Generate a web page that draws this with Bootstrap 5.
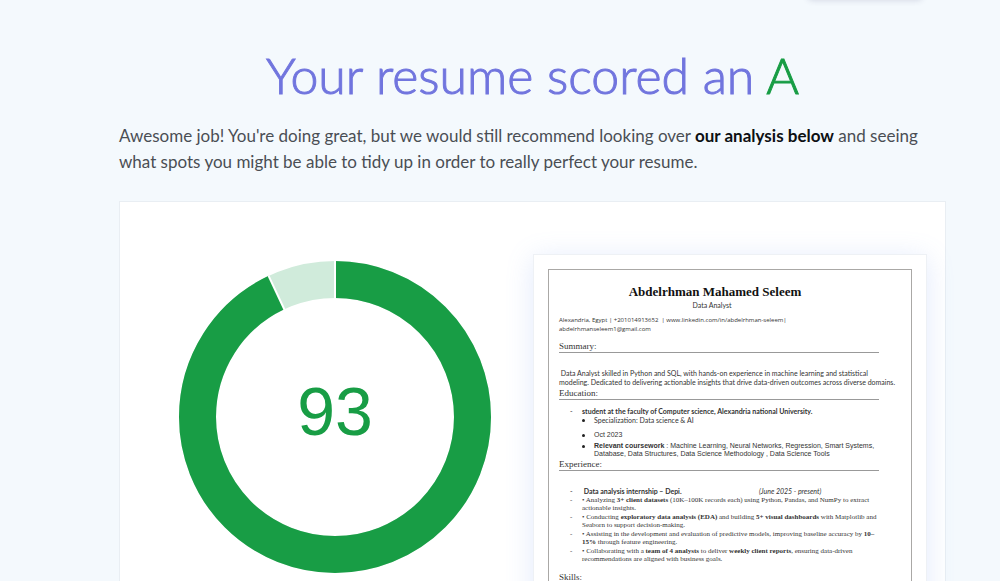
<!DOCTYPE html>
<html lang="en">
<head>
<meta charset="utf-8">
<meta name="viewport" content="width=device-width, initial-scale=1">
<title>Resume score</title>
<link href="https://cdn.jsdelivr.net/npm/bootstrap@5.3.0/dist/css/bootstrap.min.css" rel="stylesheet">
<style>
  body { background: #f4f9fd; color: #4a4e54; font-family: Lato, sans-serif; }
  .top-edge { height: 10px; padding-right: 78px; overflow: hidden; }
  .top-pill { width: 114px; height: 20px; margin-top: -21px; border-radius: 4px; box-shadow: 0 1px 6px rgba(60, 60, 110, .2); }
  .page { margin-left: 119px; margin-right: 54px; }
  .score-title { color: #7175de; font-size: 50px; line-height: 60px; font-weight: 300; padding-top: 35px; -webkit-text-stroke: 1px currentColor; }
  .grade { color: #189d45; }
  .intro { font-size: 17px; line-height: 26px; margin-top: 18px; margin-bottom: 26px; }
  .intro b { color: #0d1013; }
  .report { border: 1px solid #e9eef3; }
  .chart { width: 312px; margin: 59px 42px 59px 59px; }
  .chart text { font: 68px "Liberation Sans", sans-serif; }
  .sheet { margin-top: 52px; margin-right: 18px; padding: 14px; border: 1px solid #eef1f5; box-shadow: 0 4px 26px rgba(110, 150, 240, .2); }
  .paper { border: 1px solid #aaa8a6; padding: 13px 10px 40px; color: #333; font-size: 7px; line-height: 9px; white-space: nowrap; }
  .paper-name { font: bold 13px/18px "Liberation Serif", serif; color: #111; text-align: center; padding-right: 30px; }
  .role { padding-right: 36px; }
  .role, .contact { padding-bottom: 6px; }
  .contact { font-family: "Open Sans", sans-serif; font-size: 6px; }
  .paper h2 { font: 9px/12px "Liberation Serif", serif; margin: 0 22px 0 0; border-bottom: 1px solid #999; }
  .sum { padding-top: 16px; }
  .paper ul { list-style: none; margin: 0; padding: 0; }
  .dash::before { content: "-"; float: left; margin-left: -12px; }
  .indent { padding: 7px 0 0 23px; }
  .dot { padding-left: 12px; }
  .dot::before { content: ""; float: left; width: 3px; height: 3px; border-radius: 50%; background: #222; margin: 3px 0 0 -12px; }
  .arial { font-family: "Liberation Sans", sans-serif; line-height: 8px; }
  .year { margin: 6px 0 3px; }
  .job-head b { display: inline-block; width: 177px; }
  .jobs li { font: 7px/8px "Liberation Serif", serif; margin-bottom: 1px; }
</style>
</head>
<body>
<div class="top-edge d-flex justify-content-end"><div class="top-pill bg-white"></div></div>
<main class="page">
  <h1 class="score-title text-center mb-0">Your resume scored an <span class="grade">A</span></h1>
  <p class="intro">Awesome job! You're doing great, but we would still recommend looking over <b>our analysis below</b> and seeing<br>what spots you might be able to tidy up in order to really perfect your resume.</p>
  <section class="report bg-white d-flex align-items-start">
    <svg class="chart flex-shrink-0" viewBox="0 0 312 312" role="img" aria-label="Score 93 out of 100">
      <g fill="none" stroke-width="37" transform="rotate(-90 156 156)">
        <circle cx="156" cy="156" r="137.500" stroke="#d0ebdb"/>
        <circle cx="156" cy="156" r="137.500" stroke="#189d45" pathLength="100" stroke-dasharray="93 7"/>
      </g>
      <g stroke="#fff" stroke-width="2"><path d="M156 0V38"/><path d="M156 0V38" transform="rotate(-25.200 156 156)"/></g>
      <text x="156" y="174" text-anchor="middle" fill="#189d45">93</text>
    </svg>
    <article class="sheet bg-white flex-grow-1">
      <div class="paper">
        <div class="paper-name">Abdelrhman Mahamed Seleem</div>
        <div class="role text-center">Data Analyst</div>
        <div class="contact">Alexandria, Egypt | +201014913652 &nbsp;| www.linkedin.com/in/abdelrhman-seleem|<br>abdelrhmanseleem1@gmail.com</div>
        <h2>Summary:</h2>
        <div class="sum">&nbsp;Data Analyst skilled in Python and SQL, with hands-on experience in machine learning and statistical<br>modeling. Dedicated to delivering actionable insights that drive data-driven outcomes across diverse domains.</div>
        <h2>Education:</h2>
        <div class="indent">
          <div class="dash"><b>student at the faculty of Computer science, Alexandria national University.</b></div>
          <ul>
            <li class="dot">Specialization: Data science &amp; AI</li>
            <li class="dot arial year">Oct 2023</li>
            <li class="dot arial"><b>Relevant coursework</b> : Machine Learning, Neural Networks, Regression, Smart Systems,<br>Database, Data Structures, Data Science Methodology , Data Science Tools</li>
          </ul>
        </div>
        <h2>Experience:</h2>
        <div class="indent pt-3">
          <div class="dash job-head"><b>&nbsp;Data analysis internship – Depi.</b><i>(June 2025 - present)</i></div>
          <ul class="jobs">
            <li class="dash">• Analyzing <b>3+ client datasets</b> (10K–100K records each) using Python, Pandas, and NumPy to extract<br>actionable insights.</li>
            <li class="dash">• Conducting <b>exploratory data analysis (EDA)</b> and building <b>5+ visual dashboards</b> with Matplotlib and<br>Seaborn to support decision-making.</li>
            <li class="dash">• Assisting in the development and evaluation of predictive models, improving baseline accuracy by <b>10–</b><br><b>15%</b> through feature engineering.</li>
            <li class="dash">• Collaborating with a <b>team of 4 analysts</b> to deliver <b>weekly client reports</b>, ensuring data-driven<br>recommendations are aligned with business goals.</li>
          </ul>
        </div>
        <h2 class="mt-2">Skills:</h2>
      </div>
    </article>
  </section>
</main>
<script src="https://cdn.jsdelivr.net/npm/bootstrap@5.3.0/dist/js/bootstrap.bundle.min.js"></script>
</body>
</html>
